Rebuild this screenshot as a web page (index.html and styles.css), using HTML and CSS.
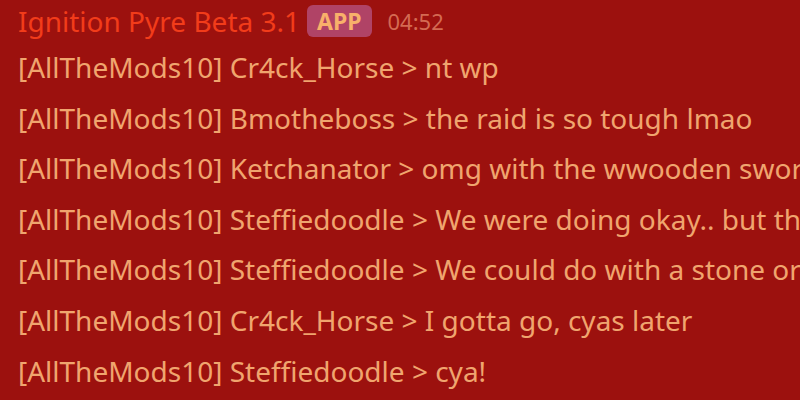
FILE: index.html
```html
<!DOCTYPE html>
<html lang="en">
<head>
    <meta charset="UTF-8">
    <title>Ignition Pyre Beta 3.1</title>
    <link rel="stylesheet" href="styles.css">
</head>
<body>
    <div class="message">
        <div class="header">
            <span class="username">Ignition Pyre Beta 3.1</span>
            <span class="badge">APP</span>
            <span class="timestamp">04:52</span>
        </div>
        <div class="line">[AllTheMods10] Cr4ck_Horse &gt; nt wp</div>
        <div class="line">[AllTheMods10] Bmotheboss &gt; the raid is so tough lmao</div>
        <div class="line">[AllTheMods10] Ketchanator &gt; omg with the wwooden sword</div>
        <div class="line">[AllTheMods10] Steffiedoodle &gt; We were doing okay.. but then the raid</div>
        <div class="line">[AllTheMods10] Steffiedoodle &gt; We could do with a stone or iron sword</div>
        <div class="line">[AllTheMods10] Cr4ck_Horse &gt; I gotta go, cyas later</div>
        <div class="line">[AllTheMods10] Steffiedoodle &gt; cya!</div>
    </div>
</body>
</html>
```

FILE: styles.css
```css
body {
    margin: 0;
    background: #9c110e;
    font-family: 'Noto Sans', sans-serif;
    width: 800px;
    height: 400px;
    overflow: hidden;
}

.message {
    padding: 0 0 0 18px;
    white-space: nowrap;
    overflow: hidden;
}

.header {
    display: flex;
    align-items: center;
    height: 42px;
}

.username {
    color: #f23c1a;
    font-size: 28px;
}

.badge {
    background: #b04366;
    color: #f8b06a;
    font-weight: 700;
    font-size: 23px;
    border-radius: 6px;
    padding: 0 10px;
    height: 32px;
    line-height: 32px;
    margin-left: 7px;
}

.timestamp {
    color: #d46a52;
    font-size: 22px;
    margin-left: 16px;
}

.line {
    color: #f0a56e;
    font-size: 28px;
    line-height: 50.6px;
}
```
